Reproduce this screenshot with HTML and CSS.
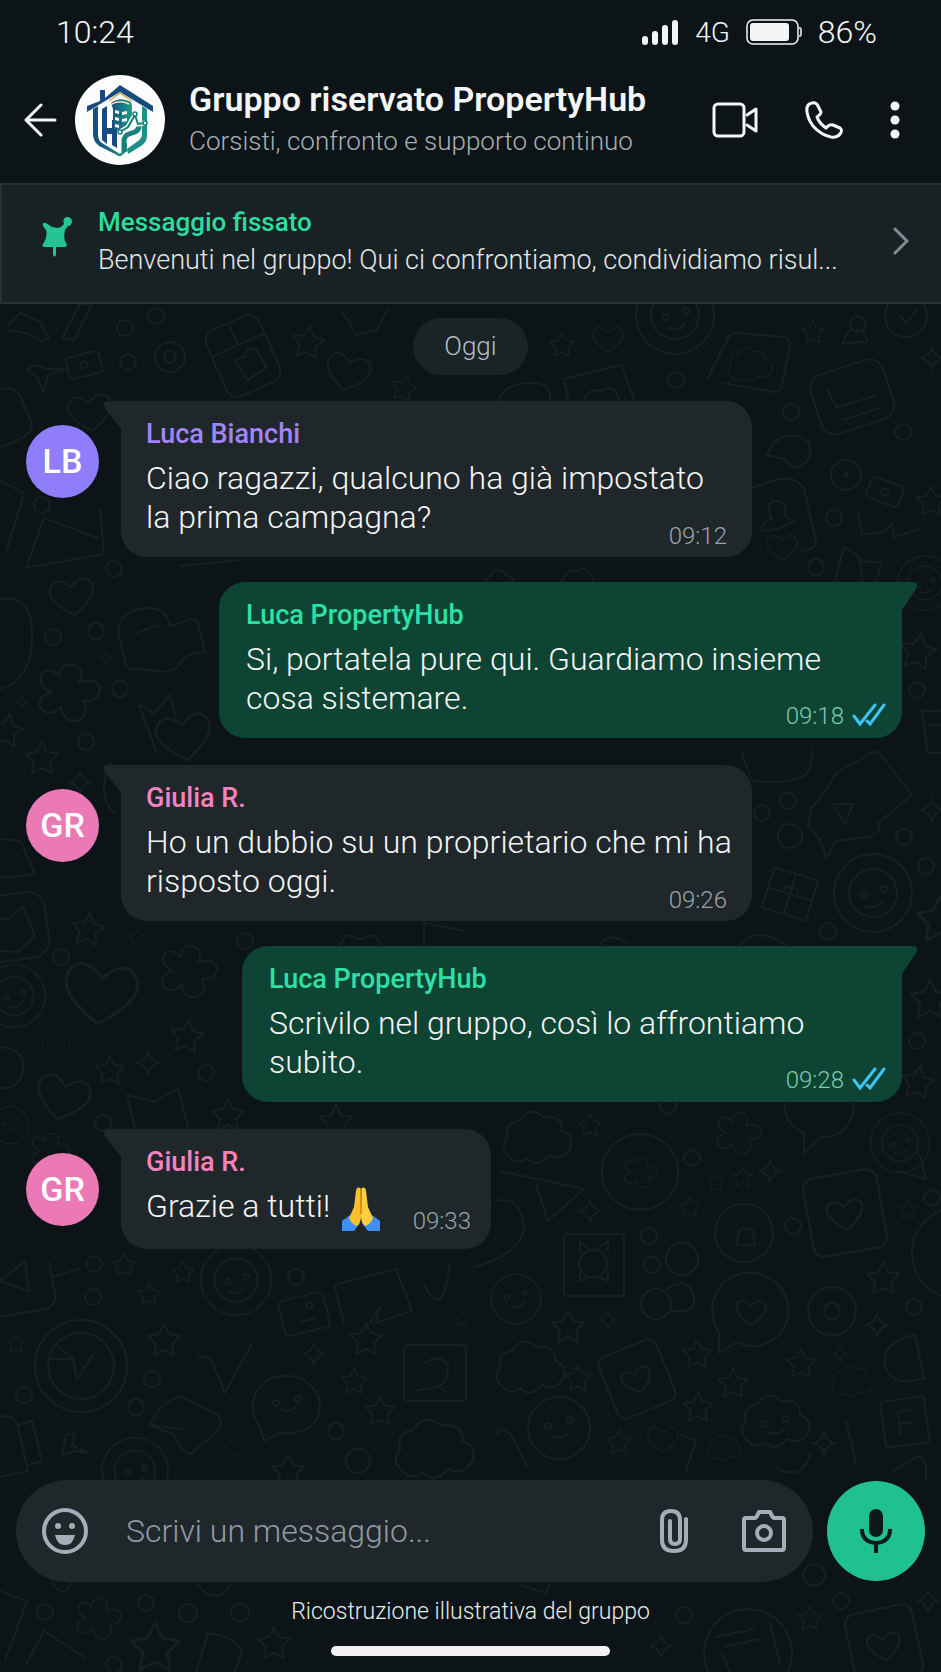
FILE: index.html
```html
<!DOCTYPE html>
<html lang="it">
<head>
<meta charset="utf-8">
<meta name="viewport" content="width=device-width, initial-scale=1">
<title>Gruppo riservato PropertyHub</title>
<link rel="stylesheet" href="styles.css">
</head>
<body>
<div class="screen">
  <div class="status">
    <time class="status-time">10:24</time>
    <div class="status-right">
      <svg class="signal" viewBox="0 0 37 25" aria-hidden="true"><rect x="0" y="16" width="6" height="9" rx="3"/><rect x="10" y="11" width="6" height="14" rx="3"/><rect x="20" y="5" width="6" height="20" rx="3"/><rect x="30" y="0" width="6" height="25" rx="3"/></svg>
      <span class="network">4G</span>
      <svg class="battery" viewBox="0 0 56 26" aria-hidden="true"><rect x="1" y="1" width="51" height="24" rx="6" fill="none" stroke="currentColor" stroke-width="1.500"/><rect x="4" y="4" width="39" height="18" rx="3"/><path d="M53 9h1q1 0 1 1v6q0 1-1 1h-1" fill="none" stroke="currentColor" stroke-width="1.500"/></svg>
      <span class="percent">86%</span>
    </div>
  </div>

  <header class="header">
    <button class="icon-button back" aria-label="Indietro"><svg viewBox="0 0 34 34"><path d="M17 2 2 17l15 15M2 17h29"/></svg></button>
    <svg class="group-logo" viewBox="0 0 90 90" role="img" aria-label="PropertyHub">
      <defs>
        <linearGradient id="brand" x1="0" x2="1" y1="0" y2="0"><stop offset="0" stop-color="#174a7e"/><stop offset=".5" stop-color="#126d82"/><stop offset="1" stop-color="#1d9a86"/></linearGradient>
        <linearGradient id="tower" x1="0" x2="1" y1="0" y2="0"><stop offset="0" stop-color="#164f80"/><stop offset="1" stop-color="#1f9d86"/></linearGradient>
      </defs>
      <circle cx="45" cy="45" r="45" fill="#fdfdfd"/>
      <path d="M25 26V15h5v8L45 10l33 21v6L45 17 12 37v-6z" fill="#174a7e"/>
      <path d="M18 34l5-3v29q0 5 4 8l18 11 2-2v-9h5v8l-6 5q-2 1-4-1L24 71q-6-5-6-12z" fill="url(#brand)"/>
      <path d="M27 34l5-3v22h5v-8h5v28l-5-3V59h-5v10l-5-4z" fill="#174a7e"/>
      <path d="M36 28q9-7 20-1l1 4v18l-7 8-12-3V34z" fill="url(#tower)"/>
      <path d="M34 26l11-8 12 8" stroke="#d9a94d" stroke-width="1.500" fill="none"/>
      <path d="M35 30q9-6 19-1" stroke="#f2e3bd" stroke-width="1.500" fill="none"/>
      <path d="M40 35l4 1v3l-4-1zM40 42l4 1v3l-4-1zM40 49l4 1v3l-4-1zM47 37l5-1v3l-5 1zM47 44l5-1v3l-5 1z" fill="#fff"/>
      <path d="M67 31l5 3v27q0 6-6 10L53 79l-1-5 11-8q4-3 4-7z" fill="#1d8f84"/>
      <path d="M49 77V66q0-5 5-7l6-2q4-2 4-6" stroke="#15807c" stroke-width="5" fill="none"/>
      <path d="M45 57l8-5 7-12 3 9 7-1" stroke="#fff" stroke-width="5" fill="none"/>
      <path d="M45 57l8-5 7-12 3 9 7-1" stroke="#178079" stroke-width="2" fill="none"/>
      <g fill="#fff" stroke="#178079" stroke-width="1.500"><circle cx="45" cy="57" r="2"/><circle cx="60" cy="39" r="2"/><circle cx="70" cy="48" r="2"/></g>
    </svg>
    <div class="group">
      <h1 class="group-name">Gruppo riservato PropertyHub</h1>
      <p class="group-about">Corsisti, confronto e supporto continuo</p>
    </div>
    <nav class="actions" aria-label="Azioni">
      <button class="icon-button video" aria-label="Videochiamata"><svg viewBox="0 0 46 36"><rect x="2" y="2" width="30" height="32" rx="4"/><path d="M35 13l9-6v22l-9-6"/></svg></button>
      <button class="icon-button phone" aria-label="Chiama"><svg viewBox="0 0 38 38"><path d="M2 11Q1 3 7 2q4-1 6 3l3 6q0 2-4 5 2 6 9 11 3-4 7-3l7 3q3 2 0 6-3 4-9 3Q16 34 8 25 3 18 2 11z"/></svg></button>
      <button class="icon-button more" aria-label="Altro"><svg viewBox="0 0 10 38"><circle cx="5" cy="5" r="4.500"/><circle cx="5" cy="19" r="4.500"/><circle cx="5" cy="33" r="4.500"/></svg></button>
    </nav>
  </header>

  <button class="pinned">
    <svg class="pin" viewBox="0 0 30 40" aria-hidden="true"><path d="M1 9Q0 5 4 6l6 4 6 1q4-1 6-4-2-6 3-7 5 0 5 5-1 4-4 4l-3 4q-2 9 1 13 2 4-1 4h-9v8q-1 3-3 0v-8H3q-4 0-2-3 5-7 3-14z"/></svg>
    <span class="pinned-text">
      <strong class="pinned-title">Messaggio fissato</strong>
      <span class="pinned-preview">Benvenuti nel gruppo! Qui ci confrontiamo, condividiamo risul...</span>
    </span>
    <svg class="chevron" viewBox="0 0 16 28" aria-hidden="true"><path d="M2 2l12 12L2 26"/></svg>
  </button>

  <div class="conversation">
    <svg class="wallpaper" viewBox="0 303 941 1369" preserveAspectRatio="xMidYMin slice" aria-hidden="true">
      <defs>
        <path id="star" d="M0-16 5-6 16-4 8 4 10 15 0 10-10 15-8 4-16-4-5-6z"/>
        <path id="spark" d="M0-11Q2-2 11 0 2 2 0 11-2 2-11 0-2-2 0-11z"/>
        <path id="heart" d="M0 20Q-26 3-21-9-14-22 0-8 14-22 21-9 26 3 0 20z"/>
        <path id="flower" d="M-8-14Q-6-28 6-24 16-20 10-9 26-14 29-3 28 9 14 8 20 22 8 26-5 28-6 13-16 24-25 15-29 4-15 0-28-6-24-17-17-24-8-14z"/>
        <g id="face"><circle r="31"/><circle cx="-11" cy="-2" r="3"/><circle cx="11" cy="-8" r="3"/><path d="M-6 8q10 5 16-4"/></g>
        <g id="ring"><circle r="39"/><circle r="24"/><circle cx="-9" cy="2" r="3"/><circle cx="11" cy="-4" r="3"/><path d="M-7 13q10 4 17-5"/></g>
        <g id="card"><rect x="-31" y="-33" width="62" height="66" rx="9"/><path d="M0 14Q-18 2-14-8-8-14 0-5 10-14 15-6 16 4 0 14z"/></g>
        <g id="bubble"><path d="M-32 22Q-48-8-26-30 0-48 26-28 48-2 28 24 8 42-14 31L-32 42z"/><path d="M0 14Q-18 2-14-8-8-14 0-5 10-14 15-6 16 4 0 14z"/></g>
        <path id="cloud" d="M-28 15Q-38 6-29-4-34-17-18-20-8-36 6-24 26-26 25-10 38-6 33 8 25 20 12 14 0 28-10 17-20 25-28 15z"/>
        <g id="ticket"><rect x="-17" y="-11" width="34" height="22" rx="4"/><ellipse rx="4" ry="3"/></g>
        <g id="gift"><rect x="-23" y="-21" width="46" height="42"/><path d="M0-21v42M-23 0h46M-8-3q8-10 8 3 0-13 8-3"/></g>
        <circle id="dot" r="8"/>
      </defs>
      <g class="doodles">
        <path d="M8 325l12-13 20 9 9 16-8 3-12-7-21-4M62 337l18-34h12l-18 36z"/>
        <use href="#dot" x="125" y="327"/><use href="#dot" x="156" y="315"/><use href="#dot" x="128" y="361"/>
        <g><use href="#ticket" transform="translate(84 364) rotate(-14)"/><path d="M66 368l-18 6-4 17-8-16-9-6q8-8 20-1z"/></g>
        <circle cx="170" cy="356" r="15"/><circle cx="170" cy="356" r="6"/>
        <g transform="translate(243 355) rotate(-24)"><rect x="-29" y="-36" width="58" height="72" rx="12"/><path d="M-29-12h58M0-36v24M-9 0l3 24 23-4-2-20q-8-9-14 1z"/></g>
        <use href="#star" transform="translate(308 341) rotate(8)"/><use href="#heart" transform="translate(348 370) rotate(14)"/><use href="#star" transform="translate(404 387) rotate(14) scale(.8)"/>
        <path d="M342 312q8 8 14 22 12-4 20-4 6-12 12-22"/>
        <use href="#heart" transform="translate(90 410) rotate(-8)"/><path d="M0 388q18-4 22 12l10 22q2 14-32 24"/>
        <use href="#star" transform="translate(562 344) scale(.75)"/><use href="#heart" transform="translate(608 337) scale(.7)"/>
        <use href="#ring" x="675" y="314"/><use href="#dot" x="676" y="379"/>
        <path d="M564 378l57-14 14 37M564 378l5 24M584 400q5-14 18-10 12-8 17 8M498 400q6-18 34-18 20 0 18 18"/>
        <path d="M708 377l20-40q4-6 12-5l31 3q20-1 19 10l-8 38q0 8-8 8l-51-9"/><use href="#cloud" transform="translate(750 366) scale(.65)"/>
        <use href="#star" transform="translate(813 331) scale(.7)"/><use href="#dot" x="858" y="323"/><path d="M842 342l8-13h12l6 12z"/>
        <g transform="translate(852 395) rotate(-18)"><rect x="-38" y="-30" width="76" height="62" rx="14"/><path d="M-22-14l4 20 40 1M-16 20h40"/></g>
        <circle cx="906" cy="315" r="21"/><path d="M900 315l6 7 12-14"/><use href="#spark" x="932" y="357"/><use href="#dot" x="903" y="431"/>
        <use href="#dot" x="791" y="411"/><path d="M767 454q10-24 32-18 18 6 8 24-10 14-22-2z"/><use href="#ticket" transform="translate(885 491) rotate(20)"/>
        <circle cx="846" cy="474" r="15"/><circle cx="846" cy="474" r="2"/><use href="#star" transform="translate(931 500) scale(.9)"/>
        <path d="M748 488l28-9q22-5 28 9l12 52q0 8-14 10"/><use href="#heart" transform="translate(782 545) scale(.7)"/><path d="M760 530q4-12 12-12-8-16 4-18 14 2 8 14l10 6-16 8z"/>
        <use href="#dot" x="834" y="517"/><use href="#dot" x="816" y="566"/><path d="M858 510l4 22q22 4 30-10l2 14 26-8M834 584l10-38 15 10 4 28M862 560l20 2-10 30"/>
        <use href="#ring" transform="translate(925 582) scale(.7)"/><use href="#star" transform="translate(918 650) rotate(10) scale(1.1)"/><use href="#dot" x="917" y="689"/>
        <path d="M940 710h-18l6 42h16M930 724h12"/>
        <path d="M0 480l24 12-18 60M26 567l18-50 54 20M26 567l78-14 -4-46"/><use href="#dot" x="114" y="568"/><use href="#dot" x="42" y="504"/>
        <use href="#heart" transform="translate(72 594) rotate(-8)"/><g transform="translate(153 640) rotate(-14)"><path d="M-32 20v-32q2-26 32-22 22 4 20 24l20-2q8 0 8 8v28q-20-6-28 6-12 6-24 0z"/><path d="M-14-12 8-14"/></g>
        <use href="#dot" x="53" y="636"/><use href="#dot" x="96" y="630"/><use href="#flower" transform="translate(68 691) scale(1.1)"/><use href="#spark" transform="translate(106 657) scale(.6)"/>
        <path d="M0 598q34-6 32 42Q30 680 0 688"/><use href="#dot" x="120" y="688"/><use href="#spark" transform="translate(22 701) scale(.5)"/><use href="#star" transform="translate(7 729) rotate(10)"/>
        <path d="M139 704l15 8 16-18 6 22 M139 704l18 48"/><use href="#heart" transform="translate(184 734) rotate(-10) scale(1.25)"/><use href="#dot" x="86" y="741"/><use href="#star" x="42" y="757"/>
        <path d="M180 565l60-6M490 575q8-12 16-1 12 2 6 14h-24q-6-8 2-13zM560 584q6-18 18-14 10-8 16 12"/>
        <use href="#spark" x="80" y="781"/><path d="M0 838l20 2 14 30q2 6-34 6M110 762q-14 34 4 50"/>
        <g transform="translate(22 930) rotate(-8)"><rect x="-40" y="-38" width="66" height="66" rx="18"/><path d="M-30-18l18 4 16-10 8 30-18 14-24-4z"/></g>
        <use href="#star" transform="translate(88 928) rotate(8)"/><use href="#star" transform="translate(137 937) scale(.5)"/><use href="#dot" x="61" y="956"/>
        <use href="#heart" transform="translate(101 990) rotate(6) scale(1.65)"/><use href="#flower" x="188" y="970"/>
        <use href="#ring" transform="translate(14 995) scale(.8)"/><use href="#ring" transform="translate(56 1045) scale(.36)"/><use href="#star" transform="translate(187 1035) rotate(8)"/><use href="#star" transform="translate(110 1069) scale(.9)"/>
        <use href="#spark" x="148" y="1062"/><use href="#dot" x="206" y="1072"/><use href="#heart" transform="translate(63 1095) rotate(14) scale(1.2)"/>
        <path d="M0 1046q26 2 23 24-3 18-23 17M127 1094l28 7 23-14 10 38M127 1094l8 34"/><use href="#face" transform="translate(10 1124) scale(.6)"/><use href="#star" x="228" y="1114"/><use href="#dot" x="103" y="1122"/>
        <use href="#star" x="336" y="1120"/><use href="#flower" transform="translate(50 1150) scale(.7)"/><use href="#dot" x="245" y="940"/><path d="M340 944l6-10 14 4 14-4 8 10M424 944v-22l40 8"/>
        <path d="M742 752l10 28q28 4 50-4 10-4 10-26M812 806q14-14 24-34l32-18q8-8 16 4l28 36-34 28q4 10-10 14l-32 4-10 18q-2-18-18-34z"/><path d="M833 803h20l-8 20z"/>
        <use href="#dot" x="788" y="800"/><use href="#dot" x="762" y="812"/><circle cx="790" cy="835" r="12"/><use href="#dot" x="904" y="836"/><use href="#dot" x="926" y="865"/><use href="#spark" x="932" y="809"/>
        <use href="#gift" transform="translate(790 893) rotate(17)"/><use href="#ring" transform="translate(873 892)"/><use href="#star" transform="translate(940 918) scale(1.4)"/><use href="#dot" x="828" y="930"/>
        <path d="M740 944q16-20 46 0M600 944q8-14 28-2"/><use href="#star" transform="translate(930 998) scale(1.2)"/><use href="#dot" x="917" y="1040"/><use href="#star" transform="translate(918 1081) rotate(8)"/>
        <use href="#cloud" transform="translate(537 1140)"/><use href="#star" transform="translate(590 1124) scale(.7)"/><use href="#dot" x="668" y="1105"/><use href="#flower" transform="translate(738 1132) scale(.8)"/>
        <circle cx="640" cy="1171" r="38"/><use href="#flower" transform="translate(640 1171) scale(.6)"/><use href="#dot" x="692" y="1157"/><path d="M784 1100q0 24 20 32v20l18-16q30 0 32-34"/>
        <use href="#ring" transform="translate(900 1142) scale(.76)"/><path d="M898 1170l28 8-6-24M500 1170l84 18-36 32-12-36"/>
        <use href="#star" transform="translate(716 1182) scale(.5)"/><use href="#star" transform="translate(743 1176) scale(.6)"/><use href="#spark" x="770" y="1170"/><use href="#star" transform="translate(690 1206) scale(.65)"/><use href="#spark" x="590" y="1210"/>
        <use href="#card" transform="translate(845 1212) rotate(-10) scale(1.2)"/><circle cx="744" cy="1232" r="29"/><path d="M736 1244l3-14q8-6 14 0l2 14z"/><use href="#dot" x="649" y="1235"/><use href="#dot" x="793" y="1225"/>
        <use href="#star" transform="translate(908 1208) scale(.6)"/><use href="#dot" x="932" y="1197"/><circle cx="958" cy="1252" r="46"/>
        <rect x="564" y="1233" width="60" height="62" rx="3"/><circle cx="593" cy="1263" r="14"/><path d="M580 1250v-10l9 8M598 1248l10-8v10M580 1270v10l10-4M598 1276l10 4v-10"/>
        <path d="M496 1200q24-6 28 24 0 28-50 42"/><use href="#face" transform="translate(516 1298) scale(.8)"/><use href="#dot" x="652" y="1264"/><circle cx="682" cy="1258" r="16"/>
        <use href="#bubble" transform="translate(751 1310)"/><circle cx="832" cy="1310" r="24"/><circle cx="832" cy="1310" r="8"/><use href="#star" x="883" y="1277"/><use href="#dot" x="914" y="1306"/><use href="#spark" x="877" y="1324"/>
        <circle cx="656" cy="1303" r="15"/><path d="M666 1288q20-12 26 3 10 22-22 19"/><use href="#star" x="568" y="1326"/><use href="#spark" transform="translate(608 1319) scale(.8)"/>
        <use href="#cloud" transform="translate(530 1370)"/><use href="#star" transform="translate(578 1377) scale(.8)"/><use href="#card" transform="translate(637 1378) rotate(-22)"/><use href="#star" transform="translate(697 1353) scale(.9)"/><use href="#star" transform="translate(733 1382) scale(.9)"/><use href="#star" transform="translate(801 1362) scale(.9)"/>
        <use href="#spark" transform="translate(840 1353) scale(.7)"/><use href="#cloud" transform="translate(852 1382) scale(.6)"/><path d="M915 1334l9 43q-36 12-40-18 2-20 31-25z"/><use href="#star" transform="translate(698 1406) scale(.9)"/>
        <use href="#face" transform="translate(559 1427)"/><use href="#cloud" transform="translate(775 1424)"/><circle cx="765" cy="1423" r="3"/><circle cx="786" cy="1418" r="3"/><path d="M769 1431q8 4 15-2"/><use href="#star" transform="translate(619 1441) scale(.75)"/><use href="#heart" transform="translate(663 1437) scale(.7)"/>
        <path d="M495 1434q8-10 16 0l16 32M682 1434l14 6-10 30M846 1420l10 42"/><use href="#spark" x="824" y="1442"/><g transform="translate(905 1422) rotate(-8)"><rect x="-22" y="-24" width="44" height="46" rx="3"/><path d="M-6 12v-24H8M-6 0H6"/></g>
        <use href="#cloud" transform="translate(724 1448) scale(.5)"/><path d="M894 1470l22-14q12-2 10 22M775 1466q26 16 36-14"/>
        <g transform="translate(15 1286)"><path d="M-15 30 30 22q12-4 10-14L34-24M-15-6 10-26 14 4zM38-10l26-8"/></g><use href="#dot" x="94" y="1263"/><use href="#dot" x="93" y="1296"/><use href="#star" transform="translate(124 1264) scale(.7)"/><use href="#star" transform="translate(149 1293) scale(.7)"/><use href="#star" transform="translate(183 1271) scale(.7)"/>
        <use href="#ring" transform="translate(236 1279) scale(.9)"/><use href="#dot" x="296" y="1276"/><g transform="translate(304 1312) rotate(-14)"><rect x="-23" y="-17" width="46" height="36" rx="5"/><circle cx="7" cy="-6" r="3"/><path d="M-4 8h12"/></g>
        <path d="M334 1284l62-16 16 42-36 12 4-16-10 16M334 1284l10 38M424 1282q18 42 26-20"/><use href="#star" transform="translate(462 1318) scale(.5)"/>
        <circle cx="81" cy="1365" r="46"/><circle cx="81" cy="1365" r="33"/><path d="M49 1358h24l-16-14M73 1358l4 20 16-24"/><use href="#star" x="164" y="1339"/><use href="#star" transform="translate(16 1342) scale(.6)"/>
        <use href="#dot" x="152" y="1378"/><use href="#dot" x="24" y="1394"/><path d="M198 1356h12l15 36 26-48"/><use href="#star" x="366" y="1338"/><use href="#spark" x="314" y="1353"/><use href="#star" transform="translate(354 1380) scale(.8)"/>
        <rect x="404" y="1344" width="62" height="56" rx="4"/><path d="M424 1362q16-10 24 2 0 20-12 22l-20 4M436 1384l12 8"/>
        <path d="M264 1440l-4-14q-14-18-2-38 16-20 44-10 26 16 14 42-12 14-36 12z"/><circle cx="276" cy="1402" r="3"/><circle cx="298" cy="1398" r="3"/><path d="M281 1408q8 4 14-2"/>
        <path d="M150 1424q14-28 32-28l36 18q6 6 0 16l-26 22q-8 4-18-18zM150 1424l32 4"/><use href="#star" transform="translate(380 1410) scale(.9)"/><use href="#dot" x="336" y="1430"/><use href="#dot" x="136" y="1406"/>
        <path d="M0 1416q14-4 18 10l10 44-28 6M18 1424l14-4 10 40-14 4"/><use href="#ring" transform="translate(135 1470) scale(.85)"/><path d="M62 1454l4-20q12-4 6 10l16 8-14-2z"/><use href="#heart" transform="translate(236 1447) scale(.45)"/><use href="#star" x="288" y="1470"/><circle cx="358" cy="1460" r="12"/><use href="#cloud" transform="translate(434 1452) scale(1.15)"/>
        <path d="M0 1590l27 10-22 60M52 1582q12 18 20-2M196 1582q20 26 36 0M26 1664l18-34 40 26"/><use href="#dot" x="45" y="1611"/><use href="#flower" transform="translate(98 1617) scale(.8)"/><use href="#dot" x="146" y="1602"/><circle cx="188" cy="1612" r="9"/><circle cx="240" cy="1612" r="9"/>
        <use href="#star" transform="translate(155 1646) scale(1.5)"/><path d="M196 1672l12-40q30 4 34 20l-8 20"/><use href="#star" x="274" y="1642"/><use href="#dot" x="114" y="1664"/>
        <circle cx="748" cy="1652" r="44"/><path d="M716 1636l38-8M724 1646l36-8M722 1652l8 20M770 1622l10 40"/><use href="#spark" x="661" y="1645"/><use href="#dot" x="684" y="1614"/><use href="#star" transform="translate(810 1617) scale(.75)"/><use href="#dot" x="841" y="1600"/><use href="#card" transform="translate(884 1644) rotate(-12) scale(1.1)"/><use href="#spark" x="928" y="1600"/><circle cx="814" cy="1574" r="11"/><path d="M520 1584l26 8 4-12"/>
      </g>
    </svg>

    <main class="messages">
      <div class="day"><time>Oggi</time></div>

      <article class="message incoming">
        <span class="avatar violet">LB</span>
        <div class="balloon medium">
          <h2 class="author violet-text">Luca Bianchi</h2>
          <p class="text">Ciao ragazzi, qualcuno ha già impostato la&nbsp;prima campagna? <span class="meta"><time>09:12</time></span></p>
        </div>
      </article>

      <article class="message outgoing">
        <div class="balloon wide">
          <h2 class="author green-text">Luca PropertyHub</h2>
          <p class="text">Si, portatela pure qui. Guardiamo insieme cosa sistemare. <span class="meta"><time>09:18</time><svg class="ticks" viewBox="0 0 34 23" role="img" aria-label="Letto"><path d="M2 13l6 8L23 2M15 18l3 3L32 2"/></svg></span></p>
        </div>
      </article>

      <article class="message incoming">
        <span class="avatar pink">GR</span>
        <div class="balloon medium">
          <h2 class="author pink-text">Giulia R.</h2>
          <p class="text">Ho un dubbio su un proprietario che mi ha risposto oggi. <span class="meta"><time>09:26</time></span></p>
        </div>
      </article>

      <article class="message outgoing">
        <div class="balloon large">
          <h2 class="author green-text">Luca PropertyHub</h2>
          <p class="text">Scrivilo nel gruppo, così lo affrontiamo subito. <span class="meta"><time>09:28</time><svg class="ticks" viewBox="0 0 34 23" role="img" aria-label="Letto"><path d="M2 13l6 8L23 2M15 18l3 3L32 2"/></svg></span></p>
        </div>
      </article>

      <article class="message incoming">
        <span class="avatar pink">GR</span>
        <div class="balloon small">
          <h2 class="author pink-text">Giulia R.</h2>
          <p class="text">Grazie a tutti!<svg class="hands" viewBox="0 0 38 44" role="img" aria-label="Mani giunte"><path d="M0 34l8-6 10 8-6 8H0z" fill="#3f8ff0"/><path d="M38 34l-8-6-10 8 6 8h12z" fill="#3f8ff0"/><path d="M18.500 1q-4-2-4.500 3l-2 16-5 11q2 6 8 8 4-3 4-10z" fill="#fdc02c"/><path d="M19.500 1q4-2 4.500 3l2 16 5 11q-2 6-8 8-4-3-4-10z" fill="#ffcf3d"/><path d="M19 2v25" stroke="#d88a15" stroke-width="1.500"/></svg> <span class="meta"><time>09:33</time></span></p>
        </div>
      </article>
    </main>

    <footer class="footer">
      <form class="composer">
        <div class="field">
          <button type="button" class="icon-button emoji" aria-label="Emoji"><svg viewBox="0 0 46 46"><circle cx="23" cy="23" r="21"/><g class="solid"><circle cx="16" cy="18" r="3"/><circle cx="30" cy="18" r="3"/><path d="M13 27h20q-2 10-10 10t-10-10z"/></g></svg></button>
          <input class="entry" type="text" placeholder="Scrivi un messaggio..." aria-label="Scrivi un messaggio">
          <button type="button" class="icon-button clip" aria-label="Allega"><svg viewBox="0 0 28 44"><path d="M26 10v21q0 11-12 11T2 31V11q0-9 9-9t9 9v19q0 5-5 5t-5-5V12"/></svg></button>
          <button type="button" class="icon-button camera" aria-label="Fotocamera"><svg viewBox="0 0 44 42"><path d="M4 8h8q2 0 3-2l2-4h11l2 4q1 2 3 2h7q2 0 2 2v28q0 2-2 2H4q-2 0-2-2V10q0-2 2-2z"/><circle cx="22" cy="23" r="7"/></svg></button>
        </div>
        <button type="button" class="mic" aria-label="Messaggio vocale"><svg viewBox="0 0 32 44"><rect x="9" y="0" width="14" height="28" rx="7" fill="currentColor"/><path d="M2 20q0 13 14 14 14-1 14-14M16 34v10" fill="none" stroke="currentColor" stroke-width="4"/></svg></button>
      </form>
      <p class="caption">Ricostruzione illustrativa del gruppo</p>
      <div class="home"></div>
    </footer>
  </div>
</div>
</body>
</html>
```
FILE: styles.css
```css
* { box-sizing: border-box; }
body, h1, h2, p { margin: 0; }
body {
  background: #0c1417;
  color: #f4f6f6;
  font-family: "Roboto", "Liberation Sans", sans-serif;
  font-weight: 300;
}
button, input { font: inherit; color: inherit; border: 0; background: none; padding: 0; }
svg { display: block; flex: none; }

.screen { min-height: 100vh; display: flex; flex-direction: column; }

.status {
  display: flex;
  justify-content: space-between;
  align-items: center;
  height: 64px;
  padding: 0 64px 0 56px;
  font-size: 32px;
}
.status-right { display: flex; align-items: center; gap: 16px; }
.signal { width: 37px; height: 25px; fill: currentColor; }
.network { font-size: 28px; }
.battery { width: 56px; height: 26px; fill: currentColor; }

.header {
  display: flex;
  align-items: center;
  height: 119px;
  padding: 0 41px 7px 24px;
}
.icon-button { flex: none; }
.icon-button svg {
  fill: none;
  stroke: currentColor;
  stroke-width: 3;
  stroke-linecap: round;
  stroke-linejoin: round;
}
.back svg { width: 34px; height: 34px; }
.group-logo { width: 90px; height: 90px; margin-left: 17px; }
.group { flex: 1; min-width: 0; margin-left: 24px; white-space: nowrap; }
.group-name { font-size: 34px; line-height: 42px; font-weight: 600; }
.group-about { font-size: 26px; line-height: 42px; color: #a9b0b4; }
.actions { display: flex; align-items: center; gap: 47px; }
.video svg { width: 46px; height: 36px; }
.phone svg { width: 38px; height: 38px; }
.more svg { width: 10px; height: 38px; fill: currentColor; stroke: none; }

.pinned {
  display: flex;
  align-items: center;
  height: 121px;
  padding: 0 32px 5px 40px;
  background: #182124;
  border: 2px solid #283134;
  border-right: 0;
  text-align: left;
}
.pin { width: 30px; height: 40px; fill: #25c495; margin-bottom: 8px; }
.pinned-text { flex: 1; min-width: 0; margin-left: 26px; display: grid; white-space: nowrap; }
.pinned-title { font-size: 26px; line-height: 38px; font-weight: 500; color: #2ddc9f; }
.pinned-preview { font-size: 27px; line-height: 38px; color: #e3e7e8; }
.chevron { width: 16px; height: 28px; fill: none; stroke: #858b93; stroke-width: 3; stroke-linecap: round; }

.conversation { position: relative; flex: 1; display: flex; flex-direction: column; }
.wallpaper { position: absolute; inset: 0; width: 100%; height: 100%; }
.doodles { fill: none; stroke: #162022; stroke-width: 2; stroke-linecap: round; stroke-linejoin: round; }

.messages { position: relative; flex: 1; padding: 14px 0 24px; }
.day {
  width: max-content;
  margin: 0 auto 26px;
  padding: 0 31px;
  border-radius: 29px;
  background: #1a2326;
  color: #b4bec8;
  font-size: 26px;
  line-height: 57px;
}
.message { display: flex; padding: 0 39px 0 26px; }
.message + .outgoing { margin-top: 25px; }
.message + .incoming { margin-top: 27px; }
.outgoing { justify-content: flex-end; }

.avatar {
  flex: none;
  width: 73px;
  height: 73px;
  margin: 24px 22px 0 0;
  border-radius: 50%;
  color: #fff;
  font-size: 34px;
  line-height: 73px;
  font-weight: 500;
  text-align: center;
}
.violet { background: #8f7dfb; }
.pink { background: #ea79b5; }

.balloon {
  --paper: #1f272a;
  position: relative;
  max-width: 100%;
  padding: 15px 16px 7px 25px;
  border-radius: 26px;
  background: var(--paper);
}
.balloon::before {
  content: "";
  position: absolute;
  top: 0;
  left: -18px;
  width: 44px;
  height: 28px;
  background: var(--paper);
  clip-path: path("M6 0H44V28H18L2 7Q-2 0 6 0Z");
}
.incoming .balloon { border-top-left-radius: 0; }
.outgoing .balloon { --paper: #0e4434; border-top-right-radius: 0; padding-left: 27px; }
.outgoing .balloon::before { left: auto; right: -16px; clip-path: path("M38 0H0V28H28L42 7Q46 0 38 0Z"); }
.medium { width: 631px; }
.wide { width: 683px; }
.large { width: 660px; }
.small { width: 370px; }
.balloon.small { padding-bottom: 14px; }

.author { position: relative; font-size: 27px; line-height: 36px; font-weight: 500; }
.violet-text { color: #a284fa; }
.pink-text { color: #f583c1; }
.green-text { color: #2de0a6; }
.text { display: flow-root; margin-top: 7px; font-size: 32px; line-height: 39px; }
.meta {
  float: right;
  display: flex;
  align-items: center;
  gap: 8px;
  margin: 24px 9px 0 0;
  font-size: 24px;
  line-height: 28px;
  color: #9ba3b0;
}
.outgoing .meta { margin: 23px 0 1px; color: #7dc9ad; }
.small .meta { margin: 20px 4px 0 0; }
.ticks { width: 34px; height: 23px; margin-bottom: 4px; fill: none; stroke: #3cc4f7; stroke-width: 3; stroke-linecap: round; }
.hands { display: inline-block; width: 38px; height: 44px; margin: -6px 0 -6px 12px; vertical-align: middle; }

.footer { position: relative; padding: 0 16px 16px; }
.composer { display: flex; align-items: center; gap: 14px; }
.field {
  flex: 1;
  min-width: 0;
  display: flex;
  align-items: center;
  height: 102px;
  padding: 0 27px 0 26px;
  border-radius: 51px;
  background: #1f272a;
  color: #a5adb9;
}
.field .icon-button svg { stroke-width: 4; }
.field .solid { fill: currentColor; stroke: none; }
.emoji svg { width: 46px; height: 46px; }
.entry { flex: 1; min-width: 0; margin: 0 24px 0 38px; height: 60px; font-size: 32px; outline: 0; }
.entry::placeholder { color: #8f99a8; opacity: 1; }
.clip svg { width: 28px; height: 44px; }
.camera { margin-left: 54px; }
.camera svg { width: 44px; height: 42px; }
.mic {
  flex: none;
  display: grid;
  place-items: center;
  width: 98px;
  height: 100px;
  border-radius: 50%;
  background: #20c191;
  color: #0c1a1a;
}
.mic svg { width: 32px; height: 44px; }
.caption { margin-top: 12px; text-align: center; font-size: 23px; line-height: 36px; color: #e9ecec; }
.home { width: 279px; height: 10px; margin: 16px auto 0; border-radius: 5px; background: #f1f2f4; }
```
